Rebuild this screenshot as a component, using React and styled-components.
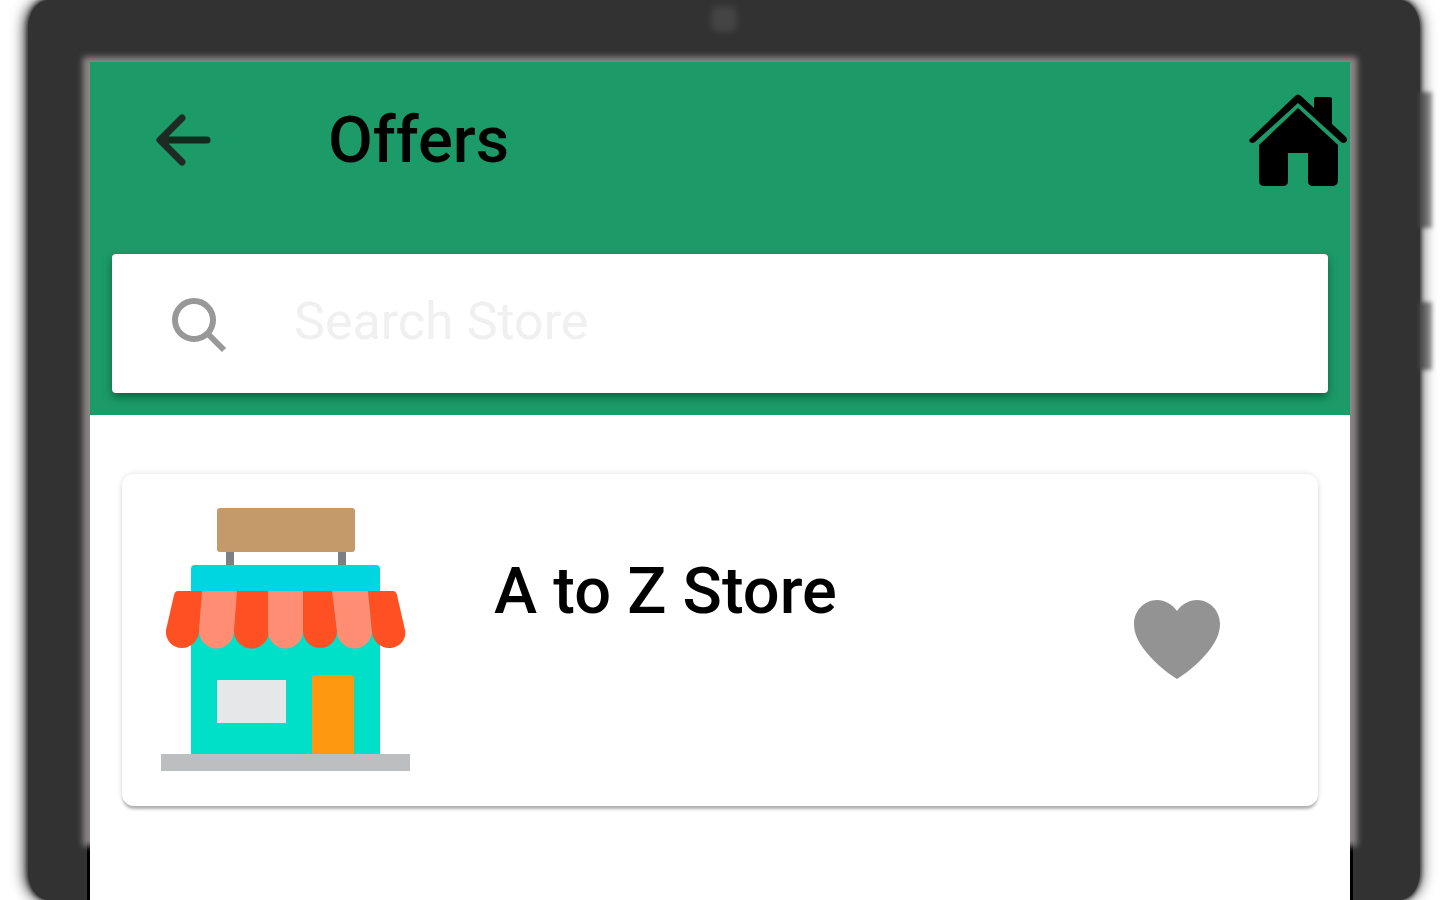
import React, { useState } from 'react'
import styled, { createGlobalStyle } from 'styled-components';

const stores = [{ id: 1, name: 'A to Z Store' }]

const BackIcon = () => (
    <svg width="56" height="54" viewBox="0 0 56 54" fill="none" stroke="#0f2b1e" strokeWidth="7" strokeLinecap="round" aria-hidden="true">
        <path d="M7 27H52" />
        <path d="M27 5L5 27L27 49" stroke="#1d2b24" strokeLinejoin="round" />
        <path d="M4 27L14 18V36Z" fill="#1d2b24" stroke="none" />
    </svg>
)

const HomeIcon = () => (
    <svg width="98" height="94" viewBox="0 0 98 94" aria-hidden="true">
        <path d="M2 45L46 3Q49 0 52 3L65 15V6Q65 4 67 4H80Q83 4 83 6V31L97 44Q99 47 97 49Q94 51 92 49L49 10L6 49Q3 51 1 49Q-1 47 2 45Z" />
        <path d="M49 15L89 52V87Q89 93 83 93H64Q59 93 59 88V60H39V88Q39 93 34 93H15Q10 93 10 87V52Z" />
    </svg>
)

const SearchIcon = () => (
    <svg width="58" height="58" viewBox="0 0 58 58" fill="none" stroke="#989898" strokeWidth="6" aria-hidden="true">
        <circle cx="24" cy="25" r="19" />
        <path d="M37 38L54 55" />
    </svg>
)

const HeartIcon = ({ color }) => (
    <svg width="86" height="80" viewBox="0 0 86 80" aria-hidden="true">
        <path fill={color} d="M43 11C38 4 31 0 23 0C10 0 0 11 0 24C0 33 4 41 9 48C18 60 30 71 43 79C56 71 68 60 77 48C82 41 86 33 86 24C86 11 76 0 63 0C55 0 48 4 43 11Z" />
    </svg>
)

const StoreLogo = () => (
    <svg width="250" height="264" viewBox="0 0 250 264" aria-hidden="true">
        <rect x="65" y="40" width="8" height="22" fill="#7c8083" />
        <rect x="177" y="40" width="8" height="22" fill="#7c8083" />
        <rect x="56" y="0" width="138" height="44" rx="3" fill="#c49a6a" />
        <path d="M30 84V61Q30 57 34 57H215Q219 57 219 61V84Z" fill="#00d6df" />
        <rect x="30" y="84" width="189" height="162" fill="#00dfc8" />
        {/* awning, one scallop after another */}
        <path d="M17 83H42L38 124C37 133 30 140 21 140C11 140 4 132 5 122L13 87Q14 83 17 83Z" fill="#ff5023" />
        <path d="M41 83H77L73 123A17 17 0 0 1 38 123Z" fill="#ff8d73" />
        <path d="M76 83H108V123A17 17 0 0 1 73 123Z" fill="#ff5023" />
        <path d="M107 83H142V123A17 17 0 0 1 107 123Z" fill="#ff8d73" />
        <path d="M142 83H172L176 123A17 17 0 0 1 142 123Z" fill="#ff5023" />
        <path d="M171 83H207L211 123A17 17 0 0 1 176 123Z" fill="#ff8d73" />
        <path d="M207 83H232Q235 83 236 87L244 122C246 132 238 140 228 140C219 140 212 133 211 124Z" fill="#ff5023" />
        <rect x="56" y="172" width="69" height="43" fill="#e6e7e8" />
        <path d="M151 246V170Q151 167 154 167H190Q193 167 193 170V246Z" fill="#ff9811" />
        <rect x="0" y="246" width="249" height="17" fill="#bcbec0" />
    </svg>
)

function App() {
    const [search, setSearch] = useState('')
    const [liked, setLiked] = useState([])

    const handleLike = (id) => {
        setLiked((prev) => prev.includes(id) ? prev.filter((item) => item !== id) : [...prev, id])
    }

    const visibleStores = stores.filter((store) => store.name.toLowerCase().includes(search.toLowerCase()))

    return (
        <Device>
            <GlobalStyle />
            <SideKey $top={92} $height={136} />
            <SideKey $top={302} $height={68} />
            <Camera />
            <Screen>
                <Content>
                    <Header>
                        <Toolbar>
                            <IconButton type="button" aria-label="Back"><BackIcon /></IconButton>
                            <Title>Offers</Title>
                            <HomeLink href="#home" aria-label="Home"><HomeIcon /></HomeLink>
                        </Toolbar>
                        <SearchBox>
                            <SearchIcon />
                            <SearchInput
                                type="text"
                                name="search"
                                aria-label="Search Store"
                                placeholder="Search Store"
                                value={search}
                                onChange={(e) => setSearch(e.target.value)}
                            />
                        </SearchBox>
                    </Header>
                    <StoreList>
                        {visibleStores.map((store) => (
                            <StoreCard key={store.id}>
                                <StoreLogo />
                                <StoreName>{store.name}</StoreName>
                                <IconButton type="button" aria-label="Favourite" onClick={() => handleLike(store.id)}>
                                    <HeartIcon color={liked.includes(store.id) ? '#ff5023' : '#939393'} />
                                </IconButton>
                            </StoreCard>
                        ))}
                    </StoreList>
                </Content>
            </Screen>
        </Device>
    )
}

const GlobalStyle = createGlobalStyle`
  * {
    box-sizing: border-box;
  }

  body {
    margin: 0;
    background: #fff;
    font-family: Roboto, "Liberation Sans", sans-serif;
    color: #000;
  }

  svg {
    display: block;
    flex-shrink: 0;
  }
`;

const Device = styled.div`
  position: relative;
  display: flex;
  min-height: 100vh;
  margin: 0 20px 0 28px;
  padding: 62px 70px 0 62px;
  border-radius: 20px / 28px;
  background: #323232;
  box-shadow: 0 0 4px 1px #323232, -4px 0 14px rgba(0, 0, 0, 0.7), 4px 0 14px rgba(0, 0, 0, 0.4);
`;

const SideKey = styled.span`
  position: absolute;
  top: ${({ $top }) => $top}px;
  right: -12px;
  width: 14px;
  height: ${({ $height }) => $height}px;
  background: linear-gradient(90deg, #323232, #9a9a9a);
  filter: blur(2px);
`;

const Camera = styled.span`
  position: absolute;
  top: 6px;
  left: calc(50% - 13px);
  width: 26px;
  height: 26px;
  border-radius: 8px;
  background: #444;
  filter: blur(3px);
`;

const Screen = styled.div`
  position: relative;
  display: flex;
  flex: 1;
  box-shadow: -3px 0 #000, 3px 0 #000;

  /* light leaking round the glass */
  &::before {
    content: "";
    position: absolute;
    inset: -5px -7px 54px;
    background: #8e8889;
    filter: blur(3px);
  }
`;

const Content = styled.div`
  position: relative;
  flex: 1;
  background: #fff;
`;

const Header = styled.header`
  padding-bottom: 22px;
  background: #1c9b69;
`;

const Toolbar = styled.div`
  display: flex;
  align-items: center;
  height: 156px;
  margin-bottom: 36px;
  padding: 0 3px 0 65px;
`;

const IconButton = styled.button`
  padding: 0;
  border: none;
  background: none;
  cursor: pointer;
`;

const Title = styled.h1`
  flex: 1;
  margin: 0 0 0 117px;
  font-size: 65px;
  font-weight: 500;
  line-height: 72px;
`;

const HomeLink = styled.a`
  color: #000;
`;

const SearchBox = styled.div`
  display: flex;
  align-items: center;
  gap: 66px;
  height: 139px;
  margin: 0 22px;
  padding: 0 58px;
  border-radius: 4px;
  background: #fff;
  box-shadow: 0 4px 8px rgba(0, 60, 35, 0.6);
`;

const SearchInput = styled.input`
  flex: 1;
  min-width: 0;
  height: 72px;
  padding: 0 0 4px;
  border: none;
  outline: none;
  background: transparent;
  font-family: inherit;
  font-size: 52px;
  color: #333;

  &::placeholder {
    color: #f0f0f0;
    opacity: 1;
  }
`;

const StoreList = styled.main`
  display: flex;
  flex-direction: column;
  gap: 32px;
  padding: 59px 32px;
`;

const StoreCard = styled.article`
  display: flex;
  align-items: center;
  padding: 34px 98px 34px 39px;
  border-radius: 12px;
  background: #fff;
  box-shadow: 0 4px 3px -1px rgba(0, 0, 0, 0.28), 0 0 6px rgba(0, 0, 0, 0.12);
`;

const StoreName = styled.h2`
  flex: 1;
  align-self: flex-start;
  margin: 47px 0 0 83px;
  font-size: 65px;
  font-weight: 500;
  line-height: 72px;
`;

export default App
